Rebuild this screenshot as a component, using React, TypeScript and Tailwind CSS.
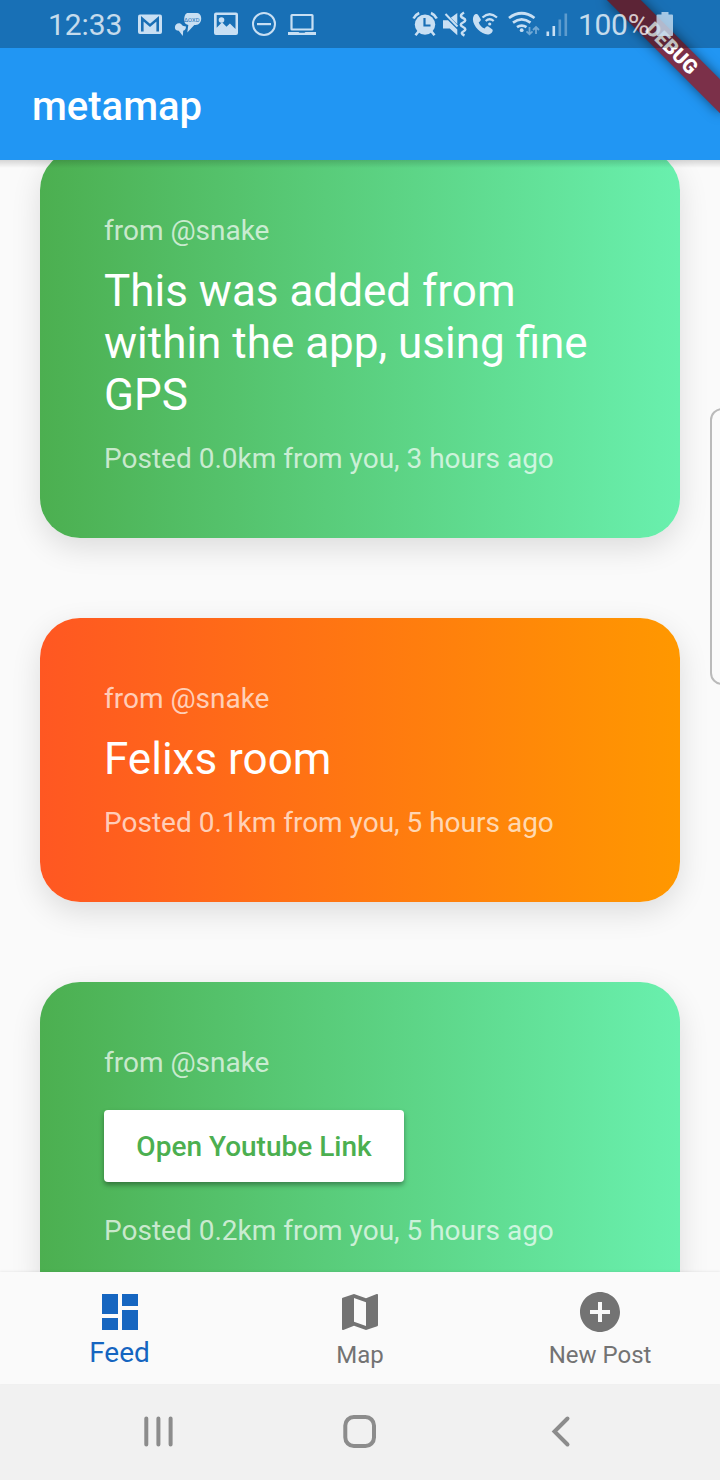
import type { ReactNode } from "react";
import { MdAddCircle, MdDashboard, MdMap } from "react-icons/md";

type Glyph = { x: number; w: number; className?: string; children: ReactNode };

/* Status glyphs share one 48px-high drawing space measured from the screen's left edge. */
function StatusGlyph({ x, w, className = "", children }: Glyph) {
  return (
    <svg width={w} height={48} viewBox={`${x} 0 ${w} 48`} className={`shrink-0 text-[#c8dff3] ${className}`} fill="currentColor">
      {children}
    </svg>
  );
}

function StatusBar() {
  return (
    <div className="absolute inset-x-0 top-0 flex h-12 items-center bg-black/25 pl-[48px] text-[30px] leading-[48px] text-white/75">
      <span className="w-[90px] pt-[2px] tracking-[-0.1px]">12:33</span>
      <StatusGlyph x={138} w={24}>
        <rect x="138" y="14.5" width="24" height="19.5" rx="2" />
        <path d="M142.3 31.5V18.8l7.7 6.6 7.7-6.6v12.7" fill="none" stroke="#1a6fb5" strokeWidth="2.6" />
      </StatusGlyph>
      <StatusGlyph x={174} w={28} className="ml-3">
        <path d="M188 13h8c3.500 0 5.200 2 5.200 5.500s-2 6.500-5.500 6.500h-1.400l-7 7.500 1-7.600c-3-.4-4.300-2.400-4.100-5.400.2-4 1.300-6.500 3.800-6.500z" />
        <path d="M179 23.300c1.200 0 2.200.5 2.700 1.500.8 1.300 2.500 1.600 4.300 1.700-.1 2.500-1.100 4-2.800 4.300l-.4 5.200-4-5.300c-2.300 0-3.900-1.100-3.900-3.300s1.700-4.100 4.100-4.100z" />
        <text x="184" y="21.700" fontSize="6" fontWeight="400" fill="#1a6fb5" textLength="15.500" lengthAdjust="spacingAndGlyphs">ΔOXD</text>
      </StatusGlyph>
      <StatusGlyph x={214} w={24} className="ml-3">
        <path fillRule="evenodd" d="M216 12.500h20a2 2 0 0 1 2 2v18.500a2 2 0 0 1-2 2h-20a2 2 0 0 1-2-2V14.500a2 2 0 0 1 2-2zm.700 2.500v12.800l5.300-5.600 4.500 4.500 3.400-3.300 5.600 5.500V15z" />
        <circle cx="221.500" cy="20" r="2.800" />
      </StatusGlyph>
      <StatusGlyph x={252} w={24} className="ml-[14px]">
        <circle cx="264" cy="24" r="11" fill="none" stroke="currentColor" strokeWidth="2" />
        <rect x="257" y="23" width="14" height="2.200" />
      </StatusGlyph>
      <StatusGlyph x={288} w={28} className="ml-3">
        <rect x="291.500" y="15" width="21" height="14.500" rx="0.500" fill="none" stroke="currentColor" strokeWidth="2.200" />
        <path d="M288 32h10.500l1 .8h5l1-.8H316v2.900h-28z" />
      </StatusGlyph>

      <StatusGlyph x={412} w={26} className="ml-[96px]">
        <path d="M413.500 18.500q2-4 5.700-5.500M431 13q3.700 1.500 5.700 5.500" fill="none" stroke="currentColor" strokeWidth="2.600" />
        <circle cx="425" cy="24.600" r="10.200" />
        <path d="M418.500 31.500l-3 3.700M431.500 31.500l3 3.700" stroke="currentColor" strokeWidth="2.600" />
        <path d="M424.500 18v7.500h6" fill="none" stroke="#1a6fb5" strokeWidth="2.200" />
      </StatusGlyph>
      <StatusGlyph x={442} w={26} className="ml-1">
        <path d="M443 20.300h5l9.300 9.300v5.700l-7.500-6.800H443zM457.300 13v11.300l-6.500-6.500z" />
        <path d="M445.500 14l12 12.500" stroke="currentColor" strokeWidth="2" />
        <path d="M464 12.500q-5.500 3.500-1 5.500 4.500 2 0 4.500-4.500 2.200 0 4.500 4.500 2.300.3 4.500-3.500 1.800 1.200 4" fill="none" stroke="currentColor" strokeWidth="2.500" />
      </StatusGlyph>
      <StatusGlyph x={472} w={28} className="ml-1">
        <path d="M474 15.300c1-1 3-1.800 4-.5l2.600 4.200c.6 1-.1 2.200-1.900 3.500 1 3 3.400 5.300 6 6 1.300-1.900 2.500-2.600 3.600-1.900l3.800 2.600c1.300 1 .3 3-1 4-6.500 5.500-22.500-9-17.100-17.900z" />
        <path d="M482.500 17.500q7-6.500 14.500 0M485.700 21q4-3.500 8 0" fill="none" stroke="currentColor" strokeWidth="2.200" />
        <circle cx="489.700" cy="24" r="1.600" />
      </StatusGlyph>
      <StatusGlyph x={508} w={32} className="ml-2">
        <path d="M509 18q12.500-9.500 25.500 0M513 22.700q8.700-6.500 17.500 0M517 27.200q4.700-3.300 9.500 0" fill="none" stroke="currentColor" strokeWidth="2.700" />
        <circle cx="521.700" cy="30.200" r="1.900" />
        <path d="M529.500 27v7M526.500 31.300l3 3 3-3M536 34v-7M533 30l3-3 3 3" fill="none" stroke="currentColor" strokeWidth="1.800" opacity=".5" />
      </StatusGlyph>
      <StatusGlyph x={546} w={22} className="ml-[6px]">
        <path d="M546.500 31.500h2.600V36h-2.600zM552.500 26h2.600v10h-2.600z" />
        <path d="M558.500 19.500h2.600V36h-2.600zM564.500 13.500h2.600V36h-2.600z" opacity=".4" />
      </StatusGlyph>
      <span className="ml-[10px] w-[78px] pt-[2px] tracking-[-0.3px]">100%</span>
      <StatusGlyph x={656} w={18} className="opacity-80">
        <path d="M661.500 12h7v2.500h3.500q1 0 1 1V35q0 1-1 1h-14.500q-1 0-1-1V15.500q0-1 1-1h4z" />
      </StatusGlyph>
    </div>
  );
}

function AppHeader() {
  return (
    <header className="relative z-10 h-40 shrink-0 overflow-hidden bg-[#2196f3] px-8 pt-12">
      <h1 className="pt-[3px] text-[40px] leading-[112px] font-medium text-white">metamap</h1>
      <div className="absolute top-0 left-full size-0 rotate-45">
        <div className="absolute top-[56px] -left-[80px] flex h-6 w-[160px] items-center justify-center bg-[#7b3049] text-[20px] leading-6 font-black text-white shadow-[0_0_12px_rgba(0,0,0,0.5)]">
          DEBUG
        </div>
      </div>
      <StatusBar />
    </header>
  );
}

const tones = {
  green: "from-[#4caf50] to-[#69f0ae]",
  orange: "from-[#ff5722] to-[#ff9800]",
};

function PostCard({ tone, meta, children }: { tone: keyof typeof tones; meta: string; children: ReactNode }) {
  return (
    <article
      className={`shrink-0 rounded-[40px] bg-linear-to-r/srgb px-16 pt-16 pb-[63px] text-[28px] leading-[33px] text-white/70 shadow-[0_10px_30px_rgba(0,0,0,0.12)] ${tones[tone]}`}
    >
      <p>from @snake</p>
      {children}
      <p>{meta}</p>
    </article>
  );
}

function PostTitle({ children }: { children: ReactNode }) {
  return <h2 className="mt-[18px] mb-[21px] text-[44px] leading-[52px] text-white">{children}</h2>;
}

function BottomTabs() {
  return (
    <nav className="z-10 grid h-28 shrink-0 grid-cols-3 bg-[#fafafa] pt-4 text-[24px] leading-7 text-[#737373] shadow-[0_-1px_2px_rgba(0,0,0,0.06)]">
      <a className="flex flex-col items-center text-[28px] leading-[33px] text-[#1565c0]">
        <MdDashboard className="size-12" />
        <span className="pr-px">Feed</span>
      </a>
      <a className="flex flex-col items-center">
        <MdMap className="size-12" />
        <span className="pt-[5px]">Map</span>
      </a>
      <a className="flex flex-col items-center">
        <MdAddCircle className="size-12" />
        <span className="pt-[5px]">New Post</span>
      </a>
    </nav>
  );
}

function SystemNav() {
  return (
    <div className="flex h-24 shrink-0 items-center bg-[#f1f1f1] pb-[2px] pl-[140px] text-[#8c8c8c]">
      <svg width="36" height="36" viewBox="140 1413 36 36" fill="none" stroke="currentColor" strokeWidth="4" strokeLinecap="round">
        <path d="M146.300 1418.500v26M158.400 1418.500v26M170.600 1418.500v26" />
      </svg>
      <svg className="ml-[164px]" width="40" height="36" viewBox="340 1413 40 36" fill="none" stroke="currentColor" strokeWidth="4">
        <rect x="345.300" y="1417" width="28.700" height="29" rx="8.500" />
      </svg>
      <svg className="ml-[164px]" width="36" height="36" viewBox="544 1413 36 36" fill="none" stroke="currentColor" strokeWidth="4" strokeLinecap="round">
        <path d="M567.500 1418.500l-13 13 13 13" />
      </svg>
    </div>
  );
}

export default function App() {
  return (
    <div className="relative flex h-[1480px] w-[720px] flex-col overflow-hidden bg-[#fafafa] font-['Roboto',sans-serif]">
      <AppHeader />
      <main className="relative flex min-h-0 flex-1 flex-col overflow-hidden">
        <div className="-mt-[10px] flex shrink-0 flex-col gap-20 px-10">
          <PostCard tone="green" meta="Posted 0.0km from you, 3 hours ago">
            <PostTitle>This was added from within the app, using fine GPS</PostTitle>
          </PostCard>
          <PostCard tone="orange" meta="Posted 0.1km from you, 5 hours ago">
            <PostTitle>Felixs room</PostTitle>
          </PostCard>
          <PostCard tone="green" meta="Posted 0.2km from you, 5 hours ago">
            <button className="mt-[31px] mb-8 block h-[72px] w-[300px] rounded-[4px] bg-white font-medium text-[#4caf50] shadow-[0_3px_5px_rgba(0,0,0,0.35)]">
              Open Youtube Link
            </button>
          </PostCard>
        </div>
        <div className="pointer-events-none absolute inset-x-0 top-0 h-2 bg-linear-to-b from-black/15 to-transparent" />
      </main>
      <BottomTabs />
      <SystemNav />
      <div className="pointer-events-none absolute top-[408px] -right-[20px] h-[277px] w-[30px] rounded-[12px] border-2 border-[#bababa] bg-[#fafafa]/60" />
    </div>
  );
}
